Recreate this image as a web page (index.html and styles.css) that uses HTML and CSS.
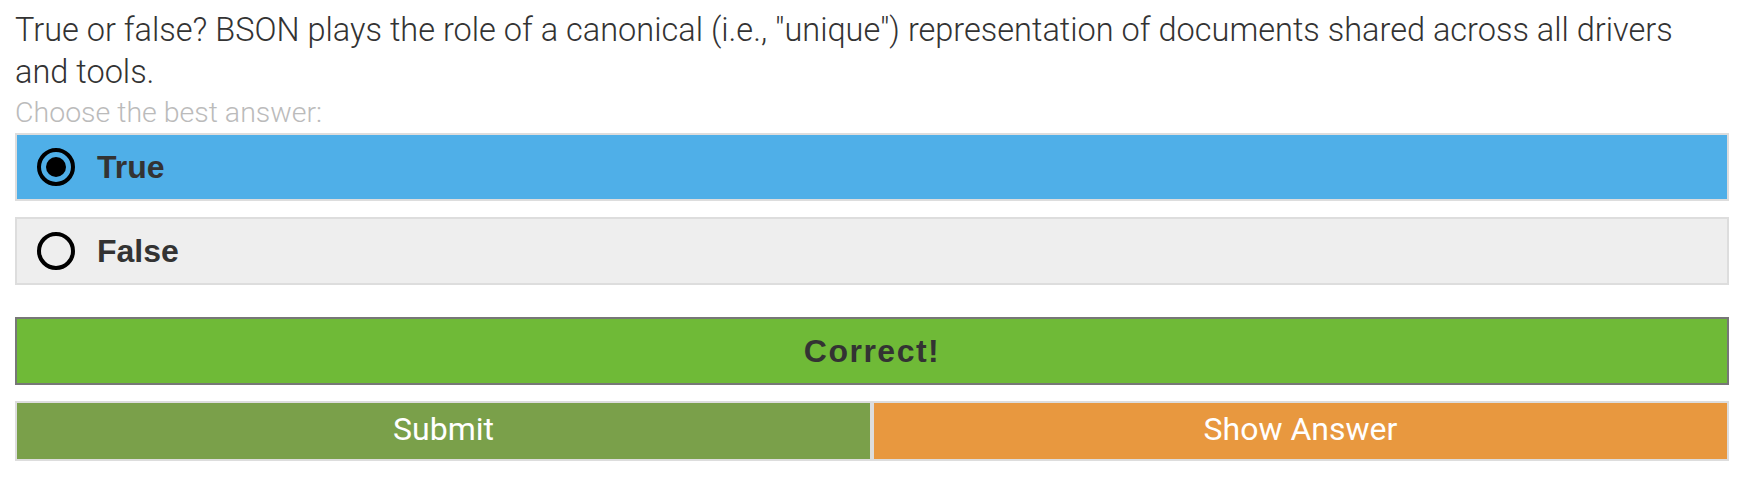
FILE: index.html
```html
<!DOCTYPE html>
<html>
<head>
    <title>Quiz question</title>
    <link rel="stylesheet" href="styles.css">
</head>
<body>
    <div id="quiz">
        <p class="question">True or false? BSON plays the role of a canonical (i.e., "unique") representation of documents shared across all drivers and tools.</p>
        <p class="hint">Choose the best answer:</p>
        <div class="options">
            <label class="option selected">
                <input type="radio" name="answer" value="true" checked>
                <span>True</span>
            </label>
            <label class="option">
                <input type="radio" name="answer" value="false">
                <span>False</span>
            </label>
        </div>
        <div class="feedback">Correct!</div>
        <div class="actions">
            <button class="btn submit">Submit</button>
            <button class="btn show">Show Answer</button>
        </div>
    </div>
</body>
</html>
```

FILE: styles.css
```css
body {
    margin: 0;
    font-family: Roboto, "Liberation Sans", Arial, sans-serif;
    background-color: #fff;
    color: #333;
}
#quiz {
    width: 1714px;
    padding: 9px 0 0 15px;
}
.question {
    margin: 0;
    max-width: 1690px;
    font-size: 32.5px;
    font-weight: 300;
    line-height: 42px;
    color: #333;
}
.hint {
    margin: 0;
    font-size: 28.5px;
    font-weight: 300;
    line-height: 40px;
    color: #bbb;
}
.options {
    display: flex;
    flex-direction: column;
    gap: 16px;
}
.option {
    display: flex;
    align-items: center;
    gap: 22px;
    height: 64px;
    padding-left: 20px;
    border: 2px solid #ddd;
    background-color: #eee;
    font-family: "Liberation Sans", Arial, sans-serif;
    font-size: 32px;
    font-weight: bold;
    color: #333;
    cursor: pointer;
}
.option.selected {
    background-color: #4fafe8;
}
.option input {
    appearance: none;
    -webkit-appearance: none;
    margin: 0;
    width: 38px;
    height: 38px;
    border: 4px solid #000;
    border-radius: 50%;
    display: flex;
    align-items: center;
    justify-content: center;
    background: transparent;
}
.option input:checked::after {
    content: "";
    width: 20px;
    height: 20px;
    border-radius: 50%;
    background-color: #000;
}
.feedback {
    margin-top: 32px;
    height: 64px;
    border: 2px solid #777;
    background-color: #6fba37;
    display: flex;
    align-items: center;
    justify-content: center;
    font-family: "Liberation Sans", Arial, sans-serif;
    font-size: 32px;
    font-weight: bold;
    letter-spacing: 1.5px;
    color: #333;
}
.actions {
    margin-top: 16px;
    display: grid;
    grid-template-columns: 1fr 1fr;
}
.btn {
    height: 60px;
    padding: 0 0 5px;
    border: 2px solid #ddd;
    font-family: Roboto, "Liberation Sans", Arial, sans-serif;
    font-size: 32px;
    color: #fff;
    cursor: pointer;
}
.btn.submit {
    background-color: #7aa04a;
}
.btn.show {
    background-color: #e8983f;
}
```
